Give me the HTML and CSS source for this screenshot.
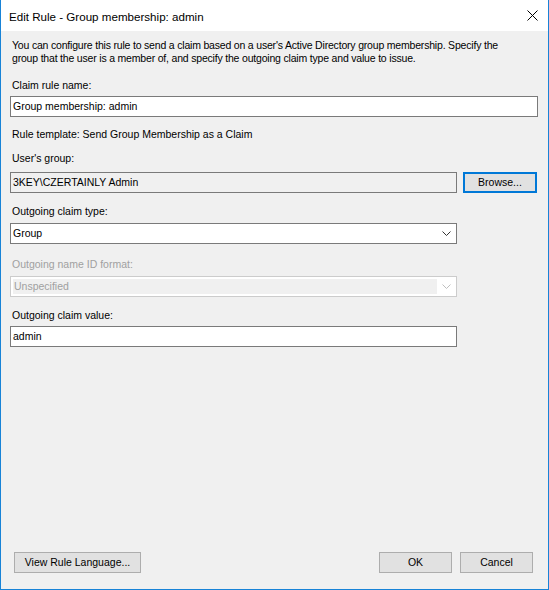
FILE: index.html
```html
<!DOCTYPE html>
<html>
<head>
<meta charset="utf-8">
<link rel="stylesheet" href="styles.css">
</head>
<body>
<div class="window">
  <div class="titlebar">
    <span class="title">Edit Rule - Group membership: admin</span>
    <svg class="close" width="11" height="11" viewBox="0 0 11 11"><path d="M0.5 0.5 L10.5 10.5 M10.5 0.5 L0.5 10.5" stroke="#000" stroke-width="1" fill="none"/></svg>
  </div>
  <div class="content">
    <p class="desc"><span class="line">You can configure this rule to send a claim based on a user's Active Directory group membership. Specify the</span><span class="line">group that the user is a member of, and specify the outgoing claim type and value to issue.</span></p>

    <div class="label l-name">Claim rule name:</div>
    <div class="field wide f-name">Group membership: admin</div>

    <div class="label l-template">Rule template: Send Group Membership as a Claim</div>

    <div class="label l-group">User's group:</div>
    <div class="row r-group">
      <div class="field readonly">3KEY\CZERTAINLY Admin</div>
      <div class="btn browse">Browse...</div>
    </div>

    <div class="label l-type">Outgoing claim type:</div>
    <div class="combo c-type">
      <span class="combo-text">Group</span>
      <svg class="chev" width="9" height="5" viewBox="0 0 9 5"><path d="M0.5 0.5 L4.5 4.5 L8.5 0.5" stroke="#333" stroke-width="1" fill="none"/></svg>
    </div>

    <div class="label disabled l-format">Outgoing name ID format:</div>
    <div class="combo dis c-format">
      <span class="combo-text dis-text">Unspecified</span>
      <span class="dis-arrow"><svg class="chev" width="9" height="5" viewBox="0 0 9 5"><path d="M0.5 0.5 L4.5 4.5 L8.5 0.5" stroke="#bfbfbf" stroke-width="1" fill="none"/></svg></span>
    </div>

    <div class="label l-value">Outgoing claim value:</div>
    <div class="field f-value">admin</div>

    <div class="footer">
      <div class="btn view">View Rule Language...</div>
      <div class="spacer"></div>
      <div class="btn ok">OK</div>
      <div class="btn cancel">Cancel</div>
    </div>
  </div>
</div>
</body>
</html>
```
FILE: styles.css
```css
* { box-sizing: border-box; }
html, body { margin: 0; padding: 0; background: #ffffff; }
body {
  font-family: "Liberation Sans", Arial, sans-serif;
  font-size: 10.5px;
  color: #000;
}
.window {
  width: 549px;
  height: 590px;
  border: 1px solid #1883d7;
  border-top: none;
  display: flex;
  flex-direction: column;
  background: #f0f0f0;
}
.titlebar {
  height: 31px;
  background: #ffffff;
  display: flex;
  align-items: center;
  padding-left: 8px;
  padding-right: 10px;
}
.title {
  font-family: "Liberation Sans", Arial, sans-serif;
  font-size: 11.6px;
  color: #000;
  flex: 1;
  margin-top: 1px;
}
.close { display: block; }
.content {
  flex: 1;
  display: flex;
  flex-direction: column;
  padding: 8px 10px 16px 9px;
}
.desc {
  margin: 0 0 0 2px;
  line-height: 13px;
}
.desc .line {
  display: block;
  white-space: nowrap;
  letter-spacing: -0.19px;
}
.label {
  line-height: 13px;
  margin-left: 2px;
  height: 13px;
  white-space: nowrap;
}
.label.disabled { color: #a0a0a0; }
.l-name { margin-top: 14px; }
.l-template { margin-top: 11px; }
.l-group { margin-top: 11px; }
.l-type { margin-top: 12px; }
.l-format { margin-top: 14px; }
.l-value { margin-top: 12px; }

.field {
  height: 21px;
  border: 1px solid #7a7a7a;
  background: #ffffff;
  line-height: 19px;
  padding-left: 2px;
  width: 447px;
  white-space: nowrap;
}
.field.wide { width: 528px; }
.f-name { margin-top: 4px; }
.f-value { margin-top: 4px; }
.field.readonly { background: #f0f0f0; }
.row { display: flex; gap: 6px; }
.r-group { margin-top: 7px; }

.btn {
  height: 21px;
  border: 1px solid #adadad;
  background: #e1e1e1;
  text-align: center;
  line-height: 19px;
  white-space: nowrap;
}
.browse {
  width: 74px;
  border: 2px solid #0078d7;
  line-height: 17px;
}
.combo {
  width: 447px;
  height: 21px;
  border: 1px solid #7a7a7a;
  background: #ffffff;
  display: flex;
  align-items: center;
  padding-left: 2px;
  padding-right: 5px;
}
.c-type { margin-top: 5px; }
.combo-text { flex: 1; line-height: 19px; }
.chev { display: block; }
.combo.dis {
  margin-top: 5px;
  border-color: #cccccc;
  padding: 2px 0 2px 2px;
  align-items: stretch;
}
.dis-text {
  background: #f0f0f0;
  color: #a0a0a0;
  line-height: 15px;
  padding-left: 1px;
  flex: 0 0 424px;
}
.dis-arrow {
  flex: 1;
  display: flex;
  align-items: center;
  justify-content: flex-end;
  padding-right: 5px;
}
.footer {
  margin-top: auto;
  display: flex;
  align-items: center;
  padding-left: 4px;
}
.view { width: 127px; }
.spacer { flex: 1; }
.ok { width: 73px; margin-right: 8px; }
.cancel { width: 73px; margin-right: 5px; }
```
